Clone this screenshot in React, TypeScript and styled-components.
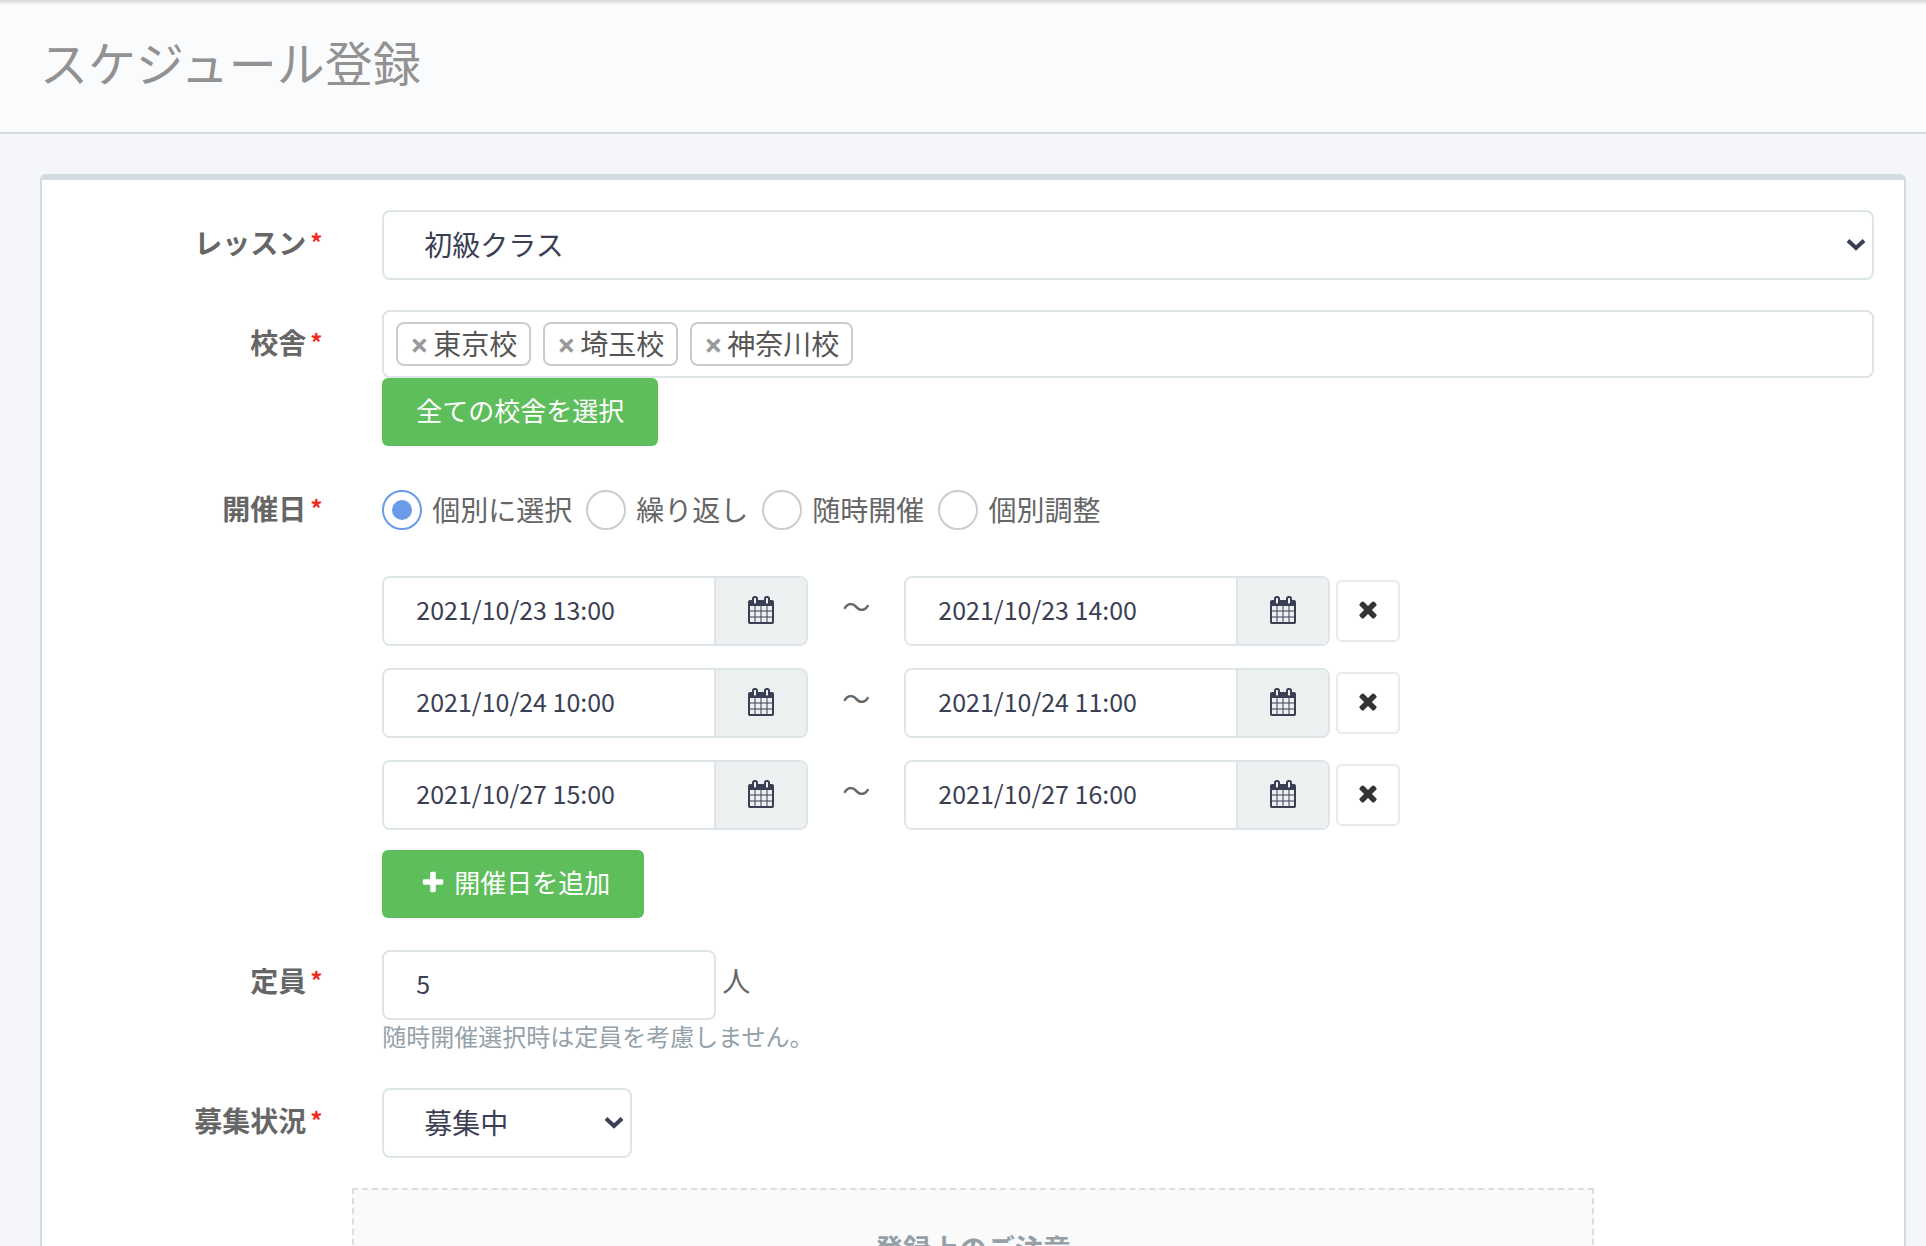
import React, { useState } from "react";
import styled, { createGlobalStyle } from "styled-components";

const GlobalStyle = createGlobalStyle`
  *, *::before, *::after { box-sizing: border-box; }
  html, body { margin: 0; background: #f4f6fa; }
  body, button, input, select {
    font-family: "Noto Sans CJK JP", "Liberation Sans", sans-serif;
  }
  body { font-size: 28px; line-height: 40px; color: #666; }
`;

const Page = styled.div`
  display: flex;
  flex-direction: column;
  height: 100vh;
  overflow: hidden;
`;

const Header = styled.header`
  flex: none;
  padding: 26px 40px 36px;
  background: linear-gradient(#d6d7d9, #fafbfd 5px);
  border-bottom: 2px solid #d1dbe1;
`;

const Title = styled.h1`
  margin: 0;
  font-size: 48px;
  line-height: 70px;
  font-weight: 400;
  color: #929292;
`;

const Main = styled.main`
  flex: 1;
  display: flex;
  padding: 40px 20px 0 40px;
`;

const Card = styled.form`
  flex: 1;
  display: flex;
  flex-direction: column;
  gap: 30px;
  padding-top: 30px;
  background: #fff;
  border: 2px solid #d1dbe1;
  border-top-width: 6px;
  border-radius: 6px 6px 0 0;
`;

const Row = styled.div`
  display: grid;
  grid-template-columns: repeat(12, minmax(0, 1fr));
`;

const LabelCell = styled.div`
  grid-column: span 2;
  display: flex;
  justify-content: flex-end;
  align-items: flex-start;
  gap: 4px;
  padding: 12px 30px 0;
  font-weight: 700;
`;

const Required = styled.span`
  font-size: 24px;
  color: #ee2b1f;
`;

const Field = styled.div`
  grid-column: span 10;
  display: flex;
  flex-direction: column;
  align-items: flex-start;
  padding: 0 30px;
`;

const SelectWrap = styled.div<{ $wide?: boolean }>`
  position: relative;
  width: ${(p) => (p.$wide ? "100%" : "250px")};
`;

const Select = styled.select`
  appearance: none;
  display: block;
  width: 100%;
  height: 70px;
  padding: 0 40px 2px;
  border: 2px solid #dee5e8;
  border-radius: 8px;
  background: #fff;
  font-size: 28px;
  color: #3b3f54;
`;

const Caret = styled.svg`
  position: absolute;
  top: 28px;
  right: 8px;
  width: 20px;
  height: 14px;
  fill: none;
  stroke: #3b3f54;
  stroke-width: 4;
  pointer-events: none;
`;

const TagBox = styled.div`
  display: flex;
  align-items: center;
  gap: 12px;
  width: 100%;
  height: 68px;
  padding: 0 12px;
  border: 2px solid #dee5e8;
  border-radius: 8px;
`;

const Tag = styled.span`
  display: flex;
  align-items: center;
  height: 44px;
  padding: 0 12px 2px 10px;
  border: 2px solid #ccc;
  border-radius: 8px;
  color: #555;
`;

const TagRemove = styled.button`
  width: 22px;
  margin-right: 3px;
  padding: 4px 0 0;
  border: 0;
  background: none;
  font-family: "Open Sans", "Noto Sans", sans-serif;
  font-size: 32px;
  line-height: 40px;
  font-weight: 700;
  color: #999;
`;

const GreenButton = styled.button`
  display: flex;
  align-items: center;
  gap: 4px;
  height: 68px;
  padding: 0 34px 6px;
  border: 0;
  border-radius: 6px;
  background: #5fbe5c;
  font-size: 26px;
  color: #fff;
`;

const RadioGroup = styled.div`
  display: flex;
  gap: 14px;
  padding: 14px 0 46px;
`;

const RadioLabel = styled.label`
  display: flex;
  align-items: center;
  gap: 10px;
`;

const RadioText = styled.span`
  padding-bottom: 2px;
  line-height: 38px;
`;

const Radio = styled.input`
  appearance: none;
  display: grid;
  place-items: center;
  width: 40px;
  height: 40px;
  margin: 0;
  border: 2px solid #ccc;
  border-radius: 50%;
  background: #fff;

  &:checked { border-color: #6b9be8; }
  &:checked::before {
    content: "";
    width: 20px;
    height: 20px;
    border-radius: 50%;
    background: #6b9be8;
  }
`;

const Slots = styled.div`
  display: flex;
  flex-direction: column;
  gap: 22px;
  margin-bottom: 20px;
`;

const Slot = styled.div`
  display: flex;
  align-items: center;
`;

const DateGroup = styled.div`
  display: flex;
  width: 426px;
  height: 70px;
  border: 2px solid #dee5e8;
  border-radius: 8px;
  overflow: hidden;
`;

const DateInput = styled.input`
  flex: 1;
  min-width: 0;
  padding: 0 32px 4px;
  border: 0;
  font-size: 25px;
  color: #3b3f54;
`;

const CalendarButton = styled.button`
  display: flex;
  align-items: center;
  justify-content: center;
  width: 92px;
  padding: 0 0 2px;
  border: 0;
  border-left: 2px solid #dee5e8;
  background: #ecf0f1;
  color: #3b3f54;
`;

const Tilde = styled.span`
  width: 96px;
  padding-bottom: 10px;
  text-align: center;
`;

const RemoveButton = styled.button`
  display: flex;
  align-items: center;
  justify-content: center;
  width: 64px;
  height: 62px;
  margin-left: 6px;
  padding: 0;
  border: 2px solid #e7e9ea;
  border-radius: 6px;
  background: #fff;
  color: #333;
`;

const Icon = styled.svg<{ $size: number; $box?: number }>`
  flex: none;
  width: ${(p) => p.$box ?? p.$size}px;
  height: ${(p) => p.$size}px;
  fill: currentColor;
`;

const CapacityLine = styled.div`
  display: flex;
  gap: 6px;
  padding-top: 2px;
`;

const NumberInput = styled.input`
  width: 334px;
  height: 70px;
  padding: 0 32px 4px;
  border: 2px solid #dee5e8;
  border-radius: 8px;
  font-size: 25px;
  color: #3b3f54;
`;

const Unit = styled.span`
  padding-top: 10px;
`;

const Help = styled.p`
  margin: 0 0 6px;
  font-size: 24px;
  line-height: 32px;
  color: #95a1a9;
`;

const Note = styled.section`
  grid-column: 3 / span 8;
  min-height: 240px;
  padding: 38px 30px;
  border: 2px dashed #ddd;
  background: #fafafa;
`;

const NoteTitle = styled.h2`
  margin: 0;
  font-size: 28px;
  line-height: 40px;
  font-weight: 700;
  text-align: center;
  color: #95a1a8;
`;

const CALENDAR =
  "M192 1664h288v-288h-288v288zm352 0h320v-288h-320v288zm-352-352h288v-320h-288v320zm352 0h320v-320h-320v320zm-352-384h288v-288h-288v288zm736 736h320v-288h-320v288zm-384-736h320v-288h-320v288zm768 736h288v-288h-288v288zm-384-352h320v-320h-320v320zm-352-864v-288q0-13-9.5-22.5t-22.5-9.5h-64q-13 0-22.5 9.5t-9.5 22.5v288q0 13 9.5 22.5t22.5 9.5h64q13 0 22.5-9.5t9.5-22.5zm736 864h288v-320h-288v320zm-384-384h320v-288h-320v288zm384 0h288v-288h-288v288zm32-480v-288q0-13-9.5-22.5t-22.5-9.5h-64q-13 0-22.5 9.5t-9.5 22.5v288q0 13 9.5 22.5t22.5 9.5h64q13 0 22.5-9.5t9.5-22.5zm384-64v1280q0 52-38 90t-90 38h-1408q-52 0-90-38t-38-90v-1280q0-52 38-90t90-38h128v-96q0-66 47-113t113-47h64q66 0 113 47t47 113v96h384v-96q0-66 47-113t113-47h64q66 0 113 47t47 113v96h128q52 0 90 38t38 90z";
const TIMES =
  "M1490 1322q0 40-28 68l-136 136q-28 28-68 28t-68-28l-294-294-294 294q-28 28-68 28t-68-28l-136-136q-28-28-28-68t28-68l294-294-294-294q-28-28-28-68t28-68l136-136q28-28 68-28t68 28l294 294 294-294q28-28 68-28t68 28l136 136q28 28 28 68t-28 68l-294 294 294 294q28 28 28 68z";
const PLUS =
  "M1600 736v192q0 40-28 68t-68 28h-416v416q0 40-28 68t-68 28h-192q-40 0-68-28t-28-68v-416h-416q-40 0-68-28t-28-68v-192q0-40 28-68t68-28h416v-416q0-40 28-68t68-28h192q40 0 68 28t28 68v416h416q40 0 68 28t28 68z";

function Label({ id, htmlFor, children }: { id?: string; htmlFor?: string; children: string }) {
  return (
    <LabelCell>
      {htmlFor ? <label htmlFor={htmlFor}>{children}</label> : <span id={id}>{children}</span>}
      <Required>*</Required>
    </LabelCell>
  );
}

function Dropdown({ id, options, wide }: { id: string; options: string[]; wide?: boolean }) {
  return (
    <SelectWrap $wide={wide}>
      <Select id={id}>
        {options.map((o) => (
          <option key={o}>{o}</option>
        ))}
      </Select>
      <Caret viewBox="0 0 20 14" aria-hidden="true">
        <path d="M2 2.5 10 10 18 2.5" />
      </Caret>
    </SelectWrap>
  );
}

function DateField({ label, value }: { label: string; value: string }) {
  return (
    <DateGroup>
      <DateInput type="text" aria-label={label} defaultValue={value} />
      <CalendarButton type="button" aria-label="カレンダー">
        <Icon $size={28} viewBox="0 0 1792 1792" aria-hidden="true">
          <path d={CALENDAR} />
        </Icon>
      </CalendarButton>
    </DateGroup>
  );
}

const SCHOOLS = ["東京校", "埼玉校", "神奈川校"];
const MODES = ["個別に選択", "繰り返し", "随時開催", "個別調整"];
const SLOTS = [
  ["2021/10/23 13:00", "2021/10/23 14:00"],
  ["2021/10/24 10:00", "2021/10/24 11:00"],
  ["2021/10/27 15:00", "2021/10/27 16:00"],
];

export default function App() {
  const [mode, setMode] = useState(MODES[0]);

  return (
    <Page>
      <GlobalStyle />
      <Header>
        <Title>スケジュール登録</Title>
      </Header>
      <Main>
        <Card>
          <Row>
            <Label htmlFor="lesson">レッスン</Label>
            <Field>
              <Dropdown id="lesson" options={["初級クラス"]} wide />
            </Field>
          </Row>
          <Row>
            <Label id="school">校舎</Label>
            <Field>
              <TagBox role="group" aria-labelledby="school">
                {SCHOOLS.map((s) => (
                  <Tag key={s}>
                    <TagRemove type="button">×</TagRemove>
                    {s}
                  </Tag>
                ))}
              </TagBox>
              <GreenButton type="button">全ての校舎を選択</GreenButton>
            </Field>
          </Row>
          <Row>
            <Label id="date">開催日</Label>
            <Field>
              <RadioGroup role="radiogroup" aria-labelledby="date">
                {MODES.map((m) => (
                  <RadioLabel key={m}>
                    <Radio type="radio" name="mode" checked={mode === m} onChange={() => setMode(m)} />
                    <RadioText>{m}</RadioText>
                  </RadioLabel>
                ))}
              </RadioGroup>
              <Slots>
                {SLOTS.map(([from, to]) => (
                  <Slot key={from}>
                    <DateField label="開始日時" value={from} />
                    <Tilde>〜</Tilde>
                    <DateField label="終了日時" value={to} />
                    <RemoveButton type="button" aria-label="削除">
                      <Icon $size={26} viewBox="0 132 1792 1792" aria-hidden="true">
                        <path d={TIMES} />
                      </Icon>
                    </RemoveButton>
                  </Slot>
                ))}
              </Slots>
              <GreenButton type="button">
                <Icon $size={26} $box={34} viewBox="0 -128 1792 1792" aria-hidden="true">
                  <path d={PLUS} />
                </Icon>
                開催日を追加
              </GreenButton>
            </Field>
          </Row>
          <Row>
            <Label htmlFor="capacity">定員</Label>
            <Field>
              <CapacityLine>
                <NumberInput id="capacity" type="text" inputMode="numeric" defaultValue="5" />
                <Unit>人</Unit>
              </CapacityLine>
              <Help>随時開催選択時は定員を考慮しません。</Help>
            </Field>
          </Row>
          <Row>
            <Label htmlFor="status">募集状況</Label>
            <Field>
              <Dropdown id="status" options={["募集中"]} />
            </Field>
          </Row>
          <Row>
            <Note>
              <NoteTitle>登録上のご注意</NoteTitle>
            </Note>
          </Row>
        </Card>
      </Main>
    </Page>
  );
}
